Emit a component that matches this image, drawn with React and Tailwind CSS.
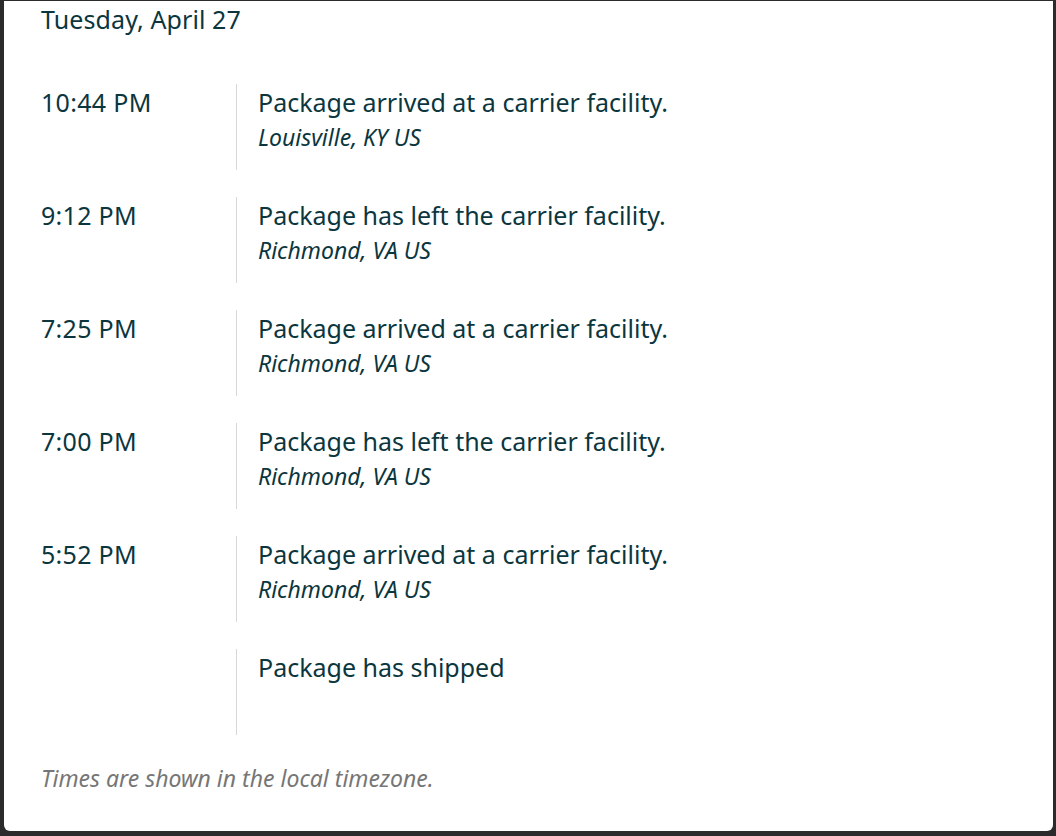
import React from "react";

const events = [
  { time: "10:44 PM", text: "Package arrived at a carrier facility.", place: "Louisville, KY US" },
  { time: "9:12 PM", text: "Package has left the carrier facility.", place: "Richmond, VA US" },
  { time: "7:25 PM", text: "Package arrived at a carrier facility.", place: "Richmond, VA US" },
  { time: "7:00 PM", text: "Package has left the carrier facility.", place: "Richmond, VA US" },
  { time: "5:52 PM", text: "Package arrived at a carrier facility.", place: "Richmond, VA US" },
  { time: "", text: "Package has shipped", place: "" },
];

export default function App() {
  return (
    <div className="w-[1056px] h-[836px] bg-[#2b2b2b] pl-[4px] pr-[3px] pt-px pb-[5px] font-['Noto_Sans',sans-serif]">
      <div className="h-full bg-white rounded-b-[6px] text-[#0b363e] px-[37px]">
        {/* Date */}
        <h2 className="text-[25px] leading-[37px] tracking-[0.1px]">Tuesday, April 27</h2>

        {/* Events */}
        <div className="mt-[46px] flex flex-col gap-[27px]">
          {events.map((e, i) => (
            <div key={i} className="flex">
              <div className="w-[195px] shrink-0 pt-[3px] text-[25px] leading-[30px] tracking-[0.3px]">
                {e.time}
              </div>
              <div className="h-[86px] border-l border-[#d5d9d9] pl-[21px] pt-[3px]">
                <div className="text-[25px] leading-[30px]">{e.text}</div>
                {e.place && (
                  <div className="italic text-[23px] leading-[30px] mt-[5px]">{e.place}</div>
                )}
              </div>
            </div>
          ))}
        </div>

        {/* Footer */}
        <p className="mt-[28px] italic text-[23px] leading-[30px] text-[#767676]">
          Times are shown in the local timezone.
        </p>
      </div>
    </div>
  );
}
